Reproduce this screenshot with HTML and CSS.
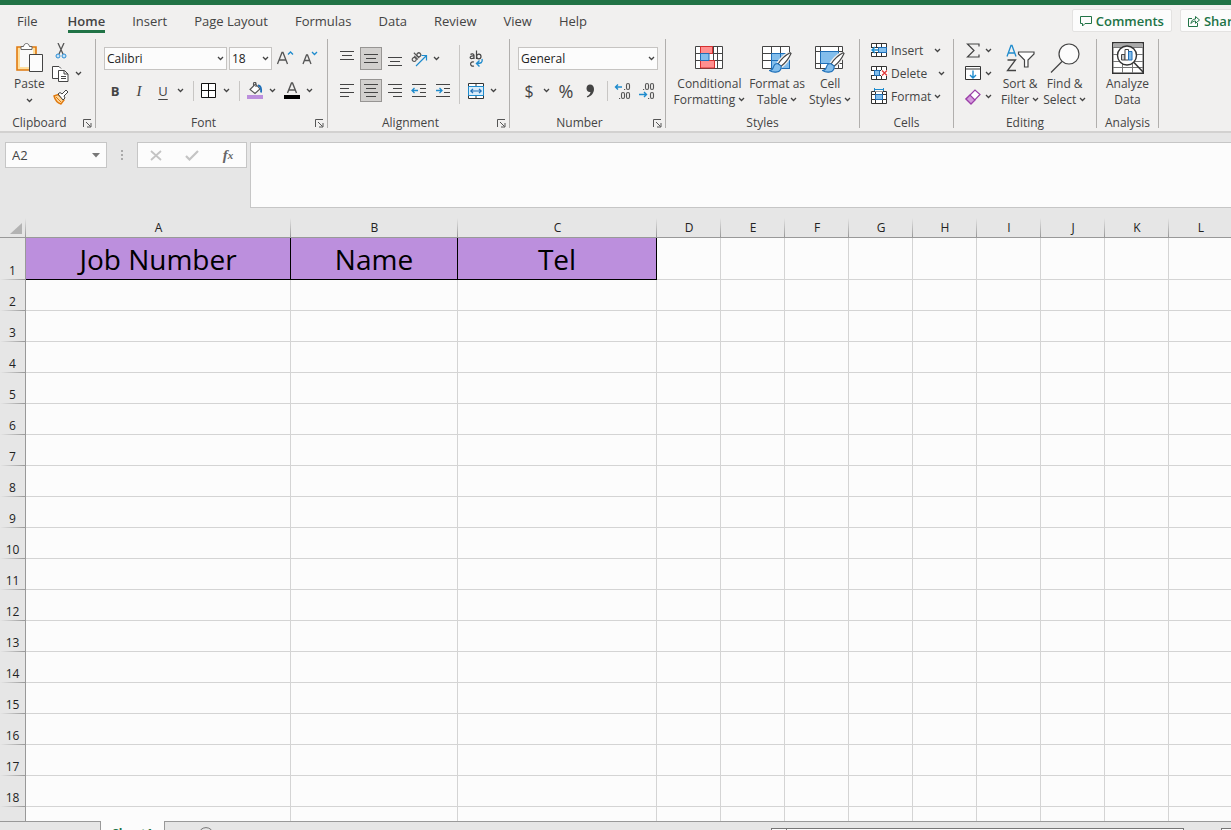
FILE: index.html
```html
<!DOCTYPE html>
<html lang="en">
<head>
<meta charset="utf-8">
<title>Workbook</title>
<link rel="stylesheet" href="styles.css">
</head>
<body>
<svg class="defs" aria-hidden="true">
  <symbol id="chev" viewBox="0 0 7 5"><path d="M1 1l2.500 2.500L6 1" fill="none" stroke="#444" stroke-width="1.300"/></symbol>
  <symbol id="launch" viewBox="0 0 9 9"><path d="M.5 8V.5H8M3 3l4.500 4.500M8 4v4H4" fill="none" stroke="#555"/></symbol>
  <symbol id="brush" viewBox="0 0 24 22"><path d="M22 .8C17 3.500 12 8.500 9.500 12.500l3 2.500C17 11.500 21 6 23 1.500z" fill="#fff" stroke="#f1f0ef" stroke-width="4"/><path d="M22 .8C17 3.500 12 8.500 9.500 12.500l3 2.500C17 11.500 21 6 23 1.500z" fill="#fff" stroke="#444" stroke-width="1.200"/><path d="M9 12c-3 0-4 2-4.500 4s-2 3-4 3.500c4 2.500 10 2 11.500-1 .8-1.500.8-2.500.5-4z" fill="#83beec" stroke="#1e6fb8" stroke-width="1.200"/></symbol>
</svg>
<div class="titlebar"></div>
<header class="tabs">
  <nav class="tablist">
    <button class="tab">File</button>
    <button class="tab active">Home</button>
    <button class="tab">Insert</button>
    <button class="tab">Page Layout</button>
    <button class="tab">Formulas</button>
    <button class="tab">Data</button>
    <button class="tab">Review</button>
    <button class="tab">View</button>
    <button class="tab">Help</button>
  </nav>
  <div class="actions">
    <button class="action"><svg width="12" height="12" viewBox="0 0 12 12"><path d="M.5 1.500h11v7H5L2.500 11V8.500h-2z" fill="none" stroke="#217346"/></svg>Comments</button>
    <button class="action"><svg width="12" height="12" viewBox="0 0 12 12"><path d="M4 3.500H.5v8h9V8M3 8.500C3.300 5.500 5 4 7.500 4V1.500L11.500 5 7.500 8.300V6C5.500 6 4 6.800 3 8.500z" fill="none" stroke="#217346"/></svg>Share</button>
  </div>
</header>

<section class="ribbon">
  <div class="group clipboard">
    <div class="body">
      <button class="big"><span class="pic"><svg width="30" height="31" viewBox="0 0 30 31"><path d="M3 5h19v23H3z" fill="#ffe0a0" stroke="#e07a10" stroke-width="1.600"/><path d="M6 7h13v18H6z" fill="#fafafa"/><path d="M7 7.500V4.500h2.500c.5-2 1.500-3 3-3s2.500 1 3 3H18v3z" fill="#fff" stroke="#666"/><path d="M15.500 12.500h13v17h-13z" fill="#fcfcfc" stroke="#444"/></svg></span>Paste<svg class="chev under" width="7" height="5"><use href="#chev"/></svg></button>
      <div class="stack">
        <div class="line"><button class="ico" aria-label="Cut"><svg width="12" height="16" viewBox="0 0 12 16"><path d="M3 0l5 11M9 0L4 11" stroke="#555" stroke-width="1.300"/><circle cx="3" cy="13" r="2" fill="#cbe4f7" stroke="#2a8dd4"/><circle cx="9" cy="13" r="2" fill="#cbe4f7" stroke="#2a8dd4"/></svg></button></div>
        <div class="line"><button class="ico" aria-label="Copy"><svg width="17" height="16" viewBox="0 0 17 16"><path d="M6 12.500H.5V.5H7l2 2" fill="#fff" stroke="#444"/><path d="M6.500 4.500h6l3.500 3.500v7.500H6.500zM12 4.500V8h4M9 10.500h5M9 12.500h5" fill="#fff" stroke="#444"/></svg></button><button class="drop" aria-label="Copy options"><svg class="chev" width="7" height="5"><use href="#chev"/></svg></button></div>
        <div class="line"><button class="ico" aria-label="Format Painter"><svg width="16" height="16" viewBox="0 0 16 16"><path d="M1 7l4-1.500 6 5.500-3 4c-3-1-6-4-7-8z" fill="#ffd79a" stroke="#e07a10" stroke-width="1.400"/><path d="M3 8l5 5" stroke="#e07a10"/><path d="M5 5l2-1.500 2 1.500 4-4 2 2-4 4 1 2-2 2z" fill="#fff" stroke="#444"/></svg></button></div>
      </div>
    </div>
    <div class="caption"><span>Clipboard</span><button class="launch" aria-label="Clipboard settings"><svg width="9" height="9"><use href="#launch"/></svg></button></div>
  </div>

  <div class="group font">
    <div class="body rows">
      <div class="row">
        <label class="pick family"><select aria-label="Font"><option>Calibri</option></select><svg class="chev" width="7" height="5"><use href="#chev"/></svg></label>
        <label class="pick size"><select aria-label="Font size"><option>18</option></select><svg class="chev" width="7" height="5"><use href="#chev"/></svg></label>
        <button class="ico" aria-label="Increase font size"><svg width="18" height="18" viewBox="0 0 18 18"><path d="M1.500 14L6 2.500h1L11.500 14M3 10h7" fill="none" stroke="#555" stroke-width="1.300"/><path d="M12 4.500L14.500 2 17 4.500" fill="none" stroke="#1e8bcd" stroke-width="1.300"/></svg></button>
        <button class="ico" aria-label="Decrease font size"><svg width="18" height="18" viewBox="0 0 18 18"><path d="M3 14l3.500-9h1l3.500 9M4.300 10.500h5.400" fill="none" stroke="#555" stroke-width="1.300"/><path d="M12 2l2.500 2.500L17 2" fill="none" stroke="#1e8bcd" stroke-width="1.300"/></svg></button>
      </div>
      <div class="row">
        <button class="ico letter bold">B</button>
        <button class="ico letter italic">I</button>
        <button class="ico letter under-line">U</button>
        <button class="drop" aria-label="Underline options"><svg class="chev" width="7" height="5"><use href="#chev"/></svg></button>
        <i class="sep"></i>
        <button class="ico" aria-label="Borders"><svg width="16" height="16" viewBox="0 0 16 16"><path d="M.5.5h14v14H.5zM7.500.5v14M.5 7.500h14" fill="#fff" stroke="#111"/></svg></button>
        <button class="drop" aria-label="Border options"><svg class="chev" width="7" height="5"><use href="#chev"/></svg></button>
        <i class="sep"></i>
        <button class="ico" aria-label="Fill colour"><svg width="16" height="18" viewBox="0 0 16 18"><path d="M3 7.500L8.500 2l4.500 5-5 4.500zM6.500 4V1.500c0-1.500 2.500-1.500 2.500 0V5" fill="#fff" stroke="#555" stroke-width="1.100"/><path d="M11 3.500c3 0 3.500 4 3 7" fill="none" stroke="#1e6fb8" stroke-width="1.800"/><path d="M0 13h16v4H0z" fill="#bc8fdd"/></svg></button>
        <button class="drop" aria-label="Fill colours"><svg class="chev" width="7" height="5"><use href="#chev"/></svg></button>
        <button class="ico" aria-label="Font colour"><svg width="16" height="18" viewBox="0 0 16 18"><path d="M3.500 11L7.500 1h1l4 10M5 8h6" fill="none" stroke="#555" stroke-width="1.400"/><path d="M0 13h16v4H0z" fill="#000"/></svg></button>
        <button class="drop" aria-label="Font colours"><svg class="chev" width="7" height="5"><use href="#chev"/></svg></button>
      </div>
    </div>
    <div class="caption"><span>Font</span><button class="launch" aria-label="Font settings"><svg width="9" height="9"><use href="#launch"/></svg></button></div>
  </div>

  <div class="group alignment">
    <div class="body">
      <div class="rows">
        <div class="row">
          <button class="ico" aria-label="Top align"><svg width="16" height="16" viewBox="0 0 16 16"><path d="M1 .5h14M3 4.500h10M1 8.500h14" stroke="#444"/></svg></button>
          <button class="ico on" aria-label="Middle align"><svg width="16" height="16" viewBox="0 0 16 16"><path d="M1 3.500h14M3 7.500h10M1 11.500h14" stroke="#444"/></svg></button>
          <button class="ico" aria-label="Bottom align"><svg width="16" height="16" viewBox="0 0 16 16"><path d="M1 6.500h14M3 10.500h10M1 14.500h14" stroke="#444"/></svg></button>
          <button class="ico" aria-label="Orientation"><svg width="18" height="18" viewBox="0 0 18 18"><g fill="none" stroke="#555" stroke-width="1.200" transform="rotate(-45 6 7)"><circle cx="3" cy="7.500" r="2"/><path d="M5.500 5v5M7.500 2.500v7.500"/><circle cx="9.500" cy="7.500" r="2"/></g><path d="M6 16L16.500 5.500M11.500 5.500h5v5" fill="none" stroke="#1e8bcd" stroke-width="1.200"/></svg></button>
          <button class="drop" aria-label="Orientation options"><svg class="chev" width="7" height="5"><use href="#chev"/></svg></button>
        </div>
        <div class="row">
          <button class="ico" aria-label="Align left"><svg width="16" height="16" viewBox="0 0 16 16"><path d="M1 1.500h14M1 5.500h9M1 9.500h14M1 13.500h9" stroke="#444"/></svg></button>
          <button class="ico on" aria-label="Centre"><svg width="16" height="16" viewBox="0 0 16 16"><path d="M1 1.500h14M3 5.500h10M1 9.500h14M3 13.500h10" stroke="#444"/></svg></button>
          <button class="ico" aria-label="Align right"><svg width="16" height="16" viewBox="0 0 16 16"><path d="M1 1.500h14M6 5.500h9M1 9.500h14M6 13.500h9" stroke="#444"/></svg></button>
          <button class="ico" aria-label="Decrease indent"><svg width="16" height="16" viewBox="0 0 16 16"><path d="M1 1.500h14M9 5.500h6M9 9.500h6M1 13.500h14" stroke="#444"/><path d="M7 7.500H1M3.500 5L1 7.500 3.500 10" fill="none" stroke="#1e8bcd" stroke-width="1.300"/></svg></button>
          <button class="ico" aria-label="Increase indent"><svg width="16" height="16" viewBox="0 0 16 16"><path d="M1 1.500h14M9 5.500h6M9 9.500h6M1 13.500h14" stroke="#444"/><path d="M1 7.500h6M4.500 5L7 7.500 4.500 10" fill="none" stroke="#1e8bcd" stroke-width="1.300"/></svg></button>
        </div>
      </div>
      <i class="sep tall"></i>
      <div class="rows">
        <div class="row"><button class="ico" aria-label="Wrap text"><svg width="16" height="18" viewBox="0 0 16 18"><g fill="none" stroke="#444" stroke-width="1.200"><path d="M2.500 4.500c1-1 3.500-1 3.500 1v3.500M6 6c-5-.5-4.500 3-2 2.500 1 0 2-.7 2-1.500M8.500.5V9"/><ellipse cx="10.800" cy="6.500" rx="2.200" ry="2.300"/><path d="M6 12c-4.500-1.500-4.500 5.500 0 4"/></g><path d="M14 9c1 3.500-1 4.500-5.500 4.500M11.500 10.500l-3 3 3 3" fill="none" stroke="#1e8bcd" stroke-width="1.400"/></svg></button></div>
        <div class="row"><button class="ico" aria-label="Merge and centre"><svg width="16" height="16" viewBox="0 0 16 16"><path d="M.5.5h15v15H.5zM8 .5v3M8 12.500v3" fill="#fff" stroke="#333"/><path d="M.5 3.500h15v9H.5z" fill="#d9ecfa" stroke="#1e8bcd"/><path d="M3 8h10M5 5.800L2.800 8 5 10.200M11 5.800L13.200 8 11 10.200" fill="none" stroke="#1e6fb8" stroke-width="1.200"/></svg></button><button class="drop" aria-label="Merge options"><svg class="chev" width="7" height="5"><use href="#chev"/></svg></button></div>
      </div>
    </div>
    <div class="caption"><span>Alignment</span><button class="launch" aria-label="Alignment settings"><svg width="9" height="9"><use href="#launch"/></svg></button></div>
  </div>

  <div class="group number">
    <div class="body rows">
      <div class="row"><label class="pick format"><select aria-label="Number format"><option>General</option></select><svg class="chev" width="7" height="5"><use href="#chev"/></svg></label></div>
      <div class="row">
        <button class="ico sign">$</button><button class="drop" aria-label="Currency options"><svg class="chev" width="7" height="5"><use href="#chev"/></svg></button>
        <button class="ico sign pct">%</button>
        <button class="ico" aria-label="Comma style"><svg width="10" height="16" viewBox="0 0 10 16"><path d="M5 1.500c2.500 0 4 1.800 4 4.500C9 10 6.500 13 2.500 14.500l-.7-1.200C4 12.300 5.300 11 5.500 9 3 9.500 1.500 7.500 1.500 5.500 1.500 3 3 1.500 5 1.500z" fill="#444"/></svg></button>
        <i class="sep"></i>
        <button class="ico" aria-label="Increase decimal"><svg width="18" height="18" viewBox="0 0 18 18"><path d="M8 5H1.500M4 2.500L1.500 5 4 7.500" fill="none" stroke="#1e8bcd" stroke-width="1.400"/><g fill="none" stroke="#555" stroke-width="1.100"><rect x="12.500" y="1.500" width="3" height="6" rx="1.500"/><rect x="7.500" y="10.500" width="3" height="6" rx="1.500"/><rect x="12.500" y="10.500" width="3" height="6" rx="1.500"/><path d="M10 7.500h1.200M5 16.500h1.200"/></g></svg></button>
        <button class="ico" aria-label="Decrease decimal"><svg width="18" height="18" viewBox="0 0 18 18"><path d="M1 12.500h7.500M6 10l2.500 2.500L6 15" fill="none" stroke="#1e8bcd" stroke-width="1.400"/><g fill="none" stroke="#555" stroke-width="1.100"><rect x="7.500" y="1.500" width="3" height="6" rx="1.500"/><rect x="12.500" y="1.500" width="3" height="6" rx="1.500"/><rect x="12.500" y="10.500" width="3" height="6" rx="1.500"/><path d="M5 7.500h1.200M10 16.500h1.200"/></g></svg></button>
      </div>
    </div>
    <div class="caption"><span>Number</span><button class="launch" aria-label="Number settings"><svg width="9" height="9"><use href="#launch"/></svg></button></div>
  </div>

  <div class="group styles">
    <div class="body">
      <button class="big"><span class="pic"><svg width="28" height="23" viewBox="0 0 28 23"><path d="M.5.5h27v22H.5zM.5 7.500h27M.5 14.500h27M5.500.5v22M18.500.5v22M22.500.5v22" fill="#fff" stroke="#444"/><path d="M5.500.5h12v7h-12zM5.500 14.500h14v7.500h-14z" fill="#ff8f8f" stroke="#d62f2f"/><path d="M5.500 7.500H14v7H5.500z" fill="#83beec" stroke="#1e6fb8"/></svg></span>Conditional<span>Formatting<svg class="chev" width="7" height="5"><use href="#chev"/></svg></span></button>
      <button class="big"><span class="pic drawn"><svg width="30" height="27" viewBox="0 0 30 27"><path d="M.5.5h27v22H.5z" fill="#fff"/><path d="M9.500 7.500h18v15h-18z" fill="#83beec"/><path d="M.5.5h27v22H.5zM.5 7.500h27M.5 14.500h27M9.500.5v22M18.500.5v22" fill="none" stroke="#444"/><path d="M9.500 7.500h18v15h-18zM18.500 7.500v15M9.500 14.500h18" fill="none" stroke="#1e6fb8"/><use href="#brush" x="7" y="6" width="23" height="21"/></svg></span>Format as<span>Table<svg class="chev" width="7" height="5"><use href="#chev"/></svg></span></button>
      <button class="big"><span class="pic drawn"><svg width="30" height="27" viewBox="0 0 30 27"><path d="M.5.5h27v22H.5zM.5 5.500h27M.5 17.500h27M5.500.5v22M23.500.5v22" fill="#fff" stroke="#444"/><path d="M5.500 5.500h18v12h-18z" fill="#83beec" stroke="#1e6fb8"/><use href="#brush" x="7" y="6" width="23" height="21"/></svg></span>Cell<span>Styles<svg class="chev" width="7" height="5"><use href="#chev"/></svg></span></button>
    </div>
    <div class="caption"><span>Styles</span></div>
  </div>

  <div class="group cells">
    <div class="body stack">
      <button class="line item wide"><svg width="17" height="15" viewBox="0 0 17 15"><path d="M.5.5h15v13H.5zM.5 4.500h15M.5 9.500h15M5.500.5v13M10.500.5v13" fill="#fff" stroke="#333"/><path d="M7.500 4.500h8v5h-8z" fill="#83beec" stroke="#1e6fb8"/><path d="M0 5h7v4H0z" fill="#fff"/><path d="M8 7H1M4 4L1 7l3 3" fill="none" stroke="#1e8bcd" stroke-width="1.500"/></svg>Insert<svg class="chev" width="7" height="5"><use href="#chev"/></svg></button>
      <button class="line item wide"><svg width="17" height="15" viewBox="0 0 17 15"><path d="M.5.500h15v13H.5zM.5 4.500h15M.5 9.500h15M5.500.5v13M10.500.5v13" fill="#fff" stroke="#333"/><path d="M0 5h4v4H0zM10 4h7v6h-7z" fill="#fff"/><path d="M3.500 4.500h5v5h-5z" fill="#83beec" stroke="#1e6fb8"/><path d="M11 4.500l5 5M16 4.500l-5 5" stroke="#e23b3b" stroke-width="1.400"/></svg>Delete<svg class="chev" width="7" height="5"><use href="#chev"/></svg></button>
      <button class="line item"><svg width="17" height="17" viewBox="0 0 17 17"><path d="M.5 3.500h15v12H.5zM.5 6.500h15M.5 11.500h15M4.500 3.500v12M11.500 3.500v12" fill="#fff" stroke="#333"/><path d="M4.500 6.500h7v5h-7z" fill="#83beec" stroke="#1e6fb8"/><path d="M4 2.500h8v1H4z" fill="#fff"/><path d="M4 1.500h8M3.500 0v3M12.500 0v3" stroke="#1e8bcd"/></svg>Format<svg class="chev" width="7" height="5"><use href="#chev"/></svg></button>
    </div>
    <div class="caption"><span>Cells</span></div>
  </div>

  <div class="group editing">
    <div class="body">
      <div class="stack">
        <button class="line item" aria-label="Sum"><svg width="17" height="15" viewBox="0 0 17 15"><path d="M14 3.500V1H2.500l6.500 6.500L2.500 14H14v-2.500" fill="none" stroke="#444" stroke-width="1.200"/></svg><svg class="chev" width="7" height="5"><use href="#chev"/></svg></button>
        <button class="line item" aria-label="Fill"><svg width="17" height="15" viewBox="0 0 17 15"><path d="M.5.5h15v13H.5zM.5 3h15" fill="#fff" stroke="#333"/><path d="M8 4.500V12M5 9l3 3 3-3" fill="none" stroke="#1e8bcd" stroke-width="1.400"/></svg><svg class="chev" width="7" height="5"><use href="#chev"/></svg></button>
        <button class="line item" aria-label="Clear"><svg width="17" height="16" viewBox="0 0 17 16"><path d="M1 10l9-9 5 4.500-9 9.500z" fill="#fff" stroke="#9b3fa8" stroke-width="1.200"/><path d="M1 10l4-4 5 5-4 4z" fill="#d59bdd" stroke="#9b3fa8" stroke-width="1.200"/></svg><svg class="chev" width="7" height="5"><use href="#chev"/></svg></button>
      </div>
      <button class="big"><span class="pic"><svg width="29" height="28" viewBox="0 0 29 28"><path d="M1 12.500L5 1.500h1l4 11M2.500 9h6" fill="none" stroke="#1e8bcd" stroke-width="1.300"/><path d="M1.500 16h8L1.500 26.500H10" fill="none" stroke="#444" stroke-width="1.300"/><path d="M12.500 8h15.500v2l-6 6v7h-3.500v-7l-6-6z" fill="#fff" stroke="#444" stroke-width="1.200"/></svg></span>Sort &amp;<span>Filter<svg class="chev" width="7" height="5"><use href="#chev"/></svg></span></button>
      <button class="big"><span class="pic"><svg width="30" height="30" viewBox="0 0 30 30"><circle cx="19" cy="11" r="10" fill="#fcfcfc" stroke="#444" stroke-width="1.200"/><path d="M12 18.500L1 29.500" stroke="#444" stroke-width="1.300"/></svg></span>Find &amp;<span>Select<svg class="chev" width="7" height="5"><use href="#chev"/></svg></span></button>
    </div>
    <div class="caption"><span>Editing</span></div>
  </div>

  <div class="group analysis">
    <div class="body">
      <button class="big"><span class="pic"><svg width="32" height="32" viewBox="0 0 32 32"><path d="M.7.7h30.600v30.600H.7z" fill="#fff" stroke="#333" stroke-width="1.400"/><path d="M1.500 1.500h29v4h-29z" fill="#aaa"/><path d="M1 5.500h30M1 12.500h30M1 19.500h30M1 25.500h30M10.500 20v11M20.500 20v11" stroke="#777"/><circle cx="15" cy="13.500" r="9.500" fill="#fff" stroke="#333" stroke-width="1.400"/><path d="M9.500 12.500h3.500V18H9.500z" fill="#ccc" stroke="#444"/><path d="M13 7.500h3.500V18H13z" fill="#fff" stroke="#444"/><path d="M16.500 9.500H20V18h-3.500z" fill="#83beec" stroke="#1e6fb8"/><path d="M22 20.500l9.500 10" stroke="#333" stroke-width="1.500"/></svg></span>Analyze<span>Data</span></button>
    </div>
    <div class="caption"><span>Analysis</span></div>
  </div>
</section>

<section class="formula-bar">
  <label class="namebox"><input value="A2" aria-label="Name box"><svg width="8" height="5" viewBox="0 0 8 5"><path d="M0 0h8L4 4.500z" fill="#777"/></svg></label>
  <svg class="grip" width="2" height="11" viewBox="0 0 2 11"><path d="M0 0h2v2H0zM0 4h2v2H0zM0 8h2v2H0z" fill="#aaa"/></svg>
  <div class="fx">
    <button aria-label="Cancel"><svg width="12" height="11" viewBox="0 0 12 11"><path d="M1 1l10 9M11 1L1 10" stroke="#c4c4c4" stroke-width="1.800"/></svg></button>
    <button aria-label="Enter"><svg width="14" height="11" viewBox="0 0 14 11"><path d="M1 6l3.500 3.500L13 1" fill="none" stroke="#c4c4c4" stroke-width="2.200"/></svg></button>
    <button class="fn" aria-label="Insert function">f<sub>x</sub></button>
  </div>
  <textarea class="formula" aria-label="Formula"></textarea>
</section>

<main class="sheet">
  <table class="grid">
    <colgroup><col class="c-row"><col class="c-a"><col class="c-b"><col class="c-c"><col span="9" class="c-rest"></colgroup>
    <thead><tr><th class="corner"><svg width="12" height="12" viewBox="0 0 12 12"><path d="M12 0v11H0z" fill="#b3b3b3"/></svg></th><th>A</th><th>B</th><th>C</th><th>D</th><th>E</th><th>F</th><th>G</th><th>H</th><th>I</th><th>J</th><th>K</th><th>L</th></tr></thead>
    <tbody id="rows">
      <tr class="first"><th>1</th><td class="head">Job Number</td><td class="head">Name</td><td class="head">Tel</td><td></td><td></td><td></td><td></td><td></td><td></td><td></td><td></td><td></td></tr>
    </tbody>
  </table>
</main>

<footer class="sheetbar">
  <div class="lead"></div>
  <button class="sheet-tab">Sheet1</button>
  <div class="rest">
    <button class="add" aria-label="New sheet"><svg width="16" height="16" viewBox="0 0 16 16"><circle cx="8" cy="8" r="7.400" fill="none" stroke="#777"/><path d="M8 4v8M4 8h8" stroke="#777"/></svg></button>
    <div class="scroll"><button class="arrow" aria-label="Scroll left"></button><div class="thumb"></div></div>
    <button class="arrow far" aria-label="Scroll right"></button>
  </div>
</footer>
<script src="script.js"></script>
</body>
</html>
```

FILE: styles.css
```css
* { box-sizing: border-box; }
body {
  margin: 0;
  height: 100vh;
  display: flex;
  flex-direction: column;
  overflow: hidden;
  background: #e6e6e6;
  color: #444;
  font: 12px/16px "Open Sans", "Noto Sans", sans-serif;
}
button, select, input, textarea { font: inherit; color: inherit; }
button { margin: 0; padding: 0; border: 0; background: none; white-space: nowrap; }
svg { flex: none; display: block; }
.defs { position: absolute; width: 0; height: 0; }

.titlebar { height: 5px; background: #217346; flex: none; }
.tabs { display: flex; justify-content: space-between; height: 34px; flex: none; background: #f1f0ef; font-size: 13px; }
.tablist { display: flex; gap: 27px; padding-left: 17px; align-items: flex-start; }
.tab { padding: 8px 0 1px; border-bottom: 3px solid transparent; }
.tab.active { font-weight: 600; border-color: #217346; margin-left: 3px; }
.actions { display: flex; gap: 8px; padding-top: 4px; margin-right: -17px; }
.action {
  display: flex; align-items: center; gap: 4px; height: 23px; padding: 0 7px;
  background: #fcfcfc; border: 1px solid #e3e2e1; border-radius: 2px;
  color: #217346; font-weight: 600;
}

.ribbon { display: flex; flex: none; height: 94px; background: #f1f0ef; border-bottom: 2px solid #d2d1d0; }
.group { display: flex; flex-direction: column; height: 89px; flex: none; border-right: 1px solid #b1afad; }
.clipboard { width: 96px; }
.font { width: 232px; }
.alignment { width: 182px; }
.number { width: 156px; }
.styles { width: 194px; }
.cells { width: 94px; }
.editing { width: 143px; }
.analysis { width: 62px; }
.body { flex: 1; display: flex; min-height: 0; }
.rows { display: flex; flex-direction: column; gap: 9px; padding-top: 8px; }
.font .body, .number .body, .alignment .body { padding-left: 8px; }
.row { display: flex; align-items: center; gap: 2px; height: 23px; }
.caption { display: flex; align-items: center; height: 10px; }
.caption span { flex: 1; text-align: center; }
.launch { width: 16px; padding-left: 4px; }
.ico { width: 22px; height: 23px; display: flex; align-items: center; justify-content: center; flex: none; }
.ico.on { background: #d2d0ce; border: 1px solid #979593; }
.drop { width: 14px; height: 23px; display: flex; align-items: center; justify-content: center; flex: none; margin-left: -3px; }
.sep { width: 1px; height: 20px; background: #c8c6c4; margin: 0 2px 0 4px; }
.sep.tall { height: 59px; margin: 6px 5px 0 5px; }
.letter { font-size: 13px; }
.bold { font-weight: 700; }
.italic { font-family: "Liberation Serif", serif; font-style: italic; font-size: 15px; }
.under-line { text-decoration: underline; text-underline-offset: 3px; }
.sign { font-size: 16px; }
.pct { font-size: 18px; }

.pick { display: grid; align-items: center; height: 23px; }
.pick > * { grid-area: 1 / 1; }
.pick select {
  appearance: none; width: 100%; height: 23px; padding: 0 2px; margin: 0;
  border: 1px solid #c6c4c2; border-radius: 0; background: #fcfcfc; color: #222;
}
.pick .chev { justify-self: end; margin-right: 3px; }
.family { width: 123px; }
.size { width: 43px; }
.format { width: 140px; }

.big { display: flex; flex-direction: column; align-items: center; justify-content: flex-start; }
.big .pic { height: 37px; display: flex; align-items: center; justify-content: center; }
.big .drawn { padding-top: 4px; }
.big span .chev { display: inline-block; margin: 0 0 2px 3px; }
.big .under { margin-top: 6px; }
.clipboard .body { padding-left: 14px; gap: 5px; }
.stack { display: flex; flex-direction: column; }
.line { display: flex; align-items: center; height: 23px; }
.line .drop { margin-left: 0; }
.styles .body { justify-content: center; gap: 4px; }
.item { gap: 3px; }
.wide .chev { margin-left: 8px; }
.cells .body { padding-left: 11px; }
.editing .body { padding-left: 11px; gap: 4px; }
.editing .stack { margin-right: 5px; }
.analysis .body { justify-content: center; }

.formula-bar { display: flex; flex: none; align-items: flex-start; padding: 9px 0 10px 5px; background: #e6e6e6; }
.namebox { display: flex; align-items: center; width: 102px; height: 26px; padding-right: 6px; background: #fcfcfc; border: 1px solid #c6c6c6; }
.namebox input { flex: 1; min-width: 0; border: 0; background: none; padding: 0 6px; font-size: 13px; }
.grip { margin: 8px 14px 0 14px; }
.fx { display: flex; width: 110px; height: 26px; background: #fcfcfc; border: 1px solid #c6c6c6; }
.fx button { flex: 1; display: flex; align-items: center; justify-content: center; }
.fx .fn { font: italic 700 15px "Liberation Serif", serif; color: #666; }
.fn sub { font-size: 11px; }
.formula { flex: 1; height: 66px; margin-left: 3px; border: 1px solid #c6c6c6; border-right: 0; background: #fcfcfc; resize: none; outline: 0; }

.sheet { flex: 1; min-height: 0; overflow: hidden; background: #fcfcfc; }
.grid { width: 1233px; table-layout: fixed; border-collapse: separate; border-spacing: 0; color: #222; }
.c-row { width: 26px; }
.c-a { width: 265px; }
.c-b { width: 167px; }
.c-c { width: 199px; }
.c-rest { width: 64px; }
.grid th, .grid td { padding: 0; font-weight: 400; }
.grid thead th {
  height: 20px; background: linear-gradient(#e6e6e6, #999) right / 1px 100% no-repeat #e6e6e6;
  border-bottom: 1px solid #999;
}
.grid .corner svg { margin: 3px 0 0 10px; }
.grid tbody th {
  height: 31px; vertical-align: bottom; padding-bottom: 1px; border-right: 1px solid #999;
  background: linear-gradient(90deg, #e6e6e6, #999) bottom / 100% 1px no-repeat #e6e6e6;
}
.grid td { border-right: 1px solid #d4d4d4; border-bottom: 1px solid #d4d4d4; }
.grid .first th { height: 42px; }
.grid .head { background: #bc8fdd; border-color: #000; text-align: center; font-size: 28px; line-height: 36px; color: #000; }

.sheetbar { display: flex; flex: none; height: 26px; margin-bottom: -17px; }
.lead { width: 101px; border: solid #999; border-width: 1px 1px 0 0; }
.sheet-tab { width: 63px; background: #fcfcfc; color: #217346; font-weight: 700; }
.rest { flex: 1; display: flex; align-items: flex-start; border: solid #999; border-width: 1px 0 0 1px; }
.add { margin: 5px 0 0 33px; }
.scroll { display: flex; width: 413px; margin: 6px 37px 0 auto; }
.arrow { width: 16px; height: 18px; border: 1px solid #777; background: #fcfcfc; }
.thumb { flex: 1; height: 18px; border: 1px solid #777; background: #fcfcfc; margin-left: -1px; }
.far { margin: 6px -6px 0 0; }
```

FILE: script.js
```js
const body = document.getElementById('rows');
for (let n = 2; n <= 19; n++) {
  const row = body.insertRow();
  const label = document.createElement('th');
  label.textContent = n;
  row.append(label);
  for (let c = 0; c < 12; c++) row.insertCell();
}
```
